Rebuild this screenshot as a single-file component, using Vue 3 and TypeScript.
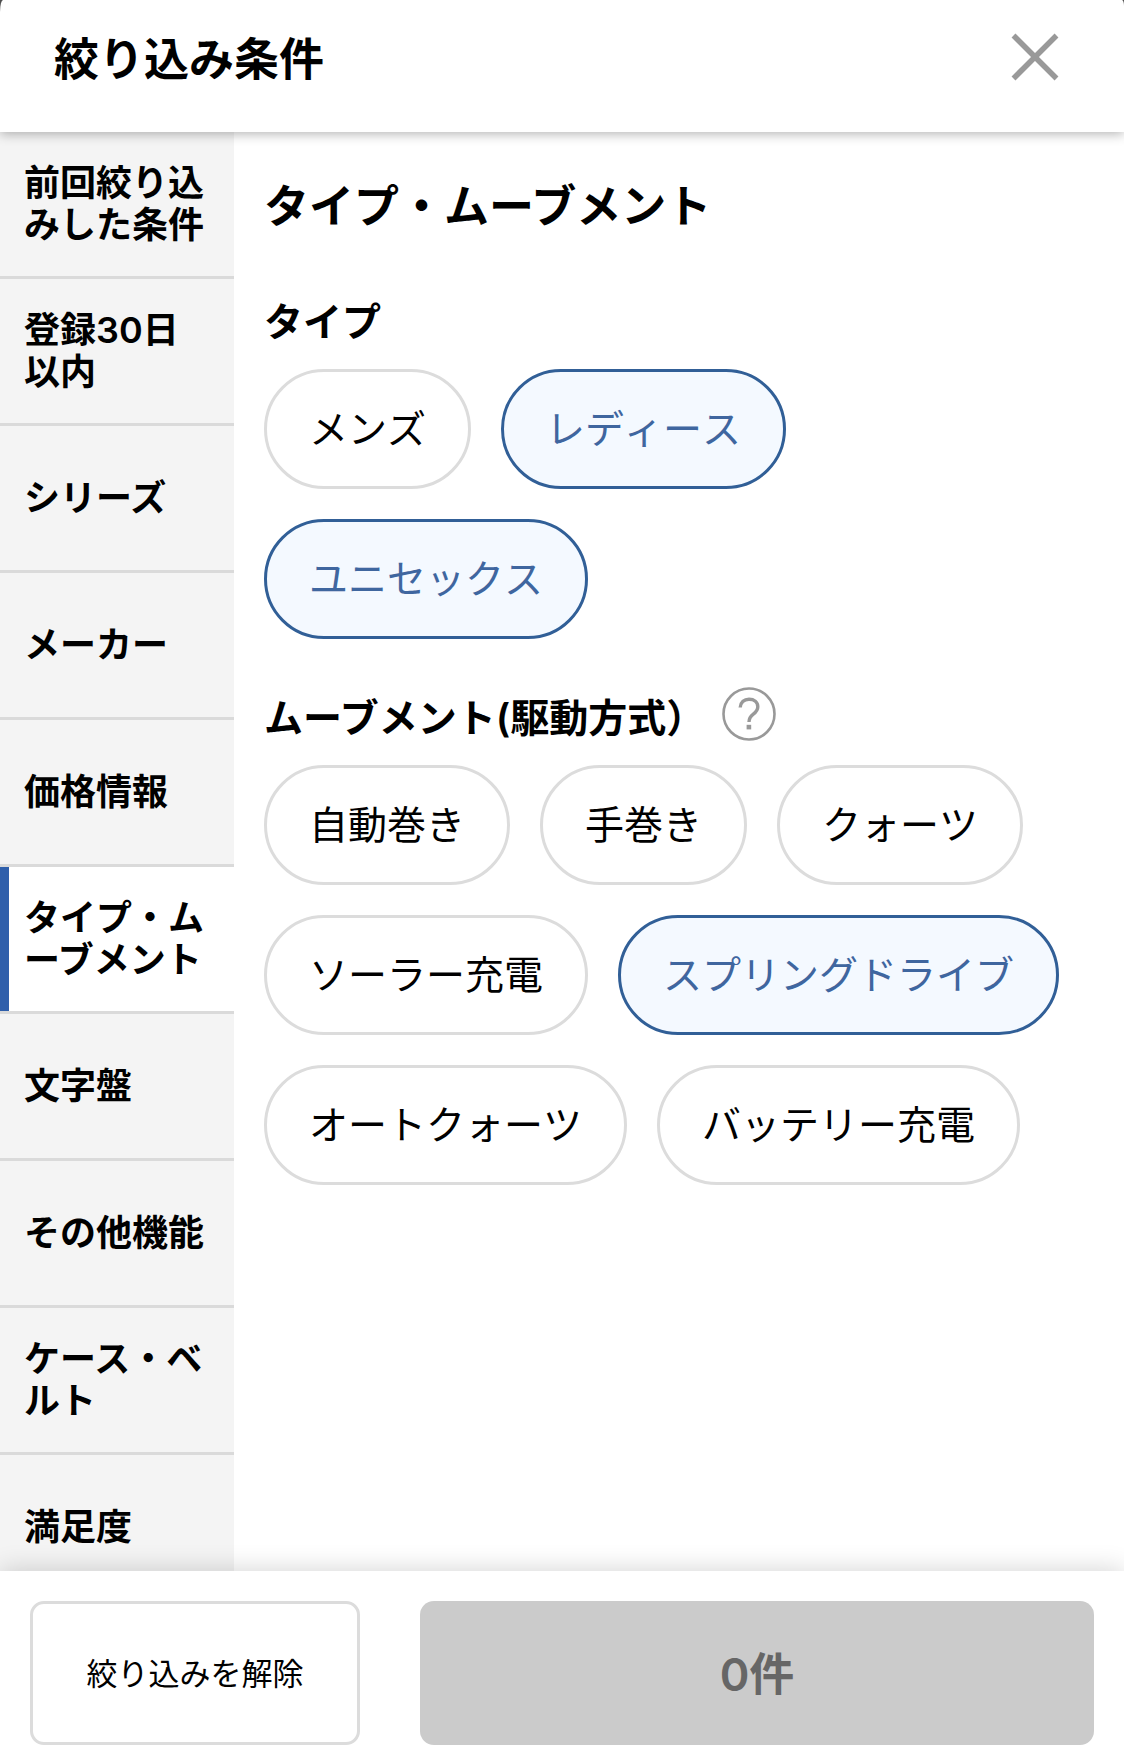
<script setup lang="ts">
import { ref } from 'vue'

interface Option {
  label: string
  selected: boolean
}

interface Group {
  title: string
  help: boolean
  options: Option[]
}

const categories: string[] = [
  '前回絞り込みした条件',
  '登録30日以内',
  'シリーズ',
  'メーカー',
  '価格情報',
  'タイプ・ムーブメント',
  '文字盤',
  'その他機能',
  'ケース・ベルト',
  '満足度',
]

const active = ref('タイプ・ムーブメント')

const groups = ref<Group[]>([
  {
    title: 'タイプ',
    help: false,
    options: [
      { label: 'メンズ', selected: false },
      { label: 'レディース', selected: true },
      { label: 'ユニセックス', selected: true },
    ],
  },
  {
    title: 'ムーブメント(駆動方式）',
    help: true,
    options: [
      { label: '自動巻き', selected: false },
      { label: '手巻き', selected: false },
      { label: 'クォーツ', selected: false },
      { label: 'ソーラー充電', selected: false },
      { label: 'スプリングドライブ', selected: true },
      { label: 'オートクォーツ', selected: false },
      { label: 'バッテリー充電', selected: false },
    ],
  },
])

function clearAll(): void {
  groups.value.forEach((g) => g.options.forEach((o) => (o.selected = false)))
}
</script>

<template>
  <div class="sheet" lang="ja">
    <header class="header">
      <h1 class="header-title">絞り込み条件</h1>
      <button class="close" type="button" aria-label="閉じる">
        <svg viewBox="0 0 48 48" width="48" height="48" aria-hidden="true">
          <path d="M2.5 2.5 45.5 45.5M45.5 2.5 2.5 45.5" fill="none" stroke="#999" stroke-width="5.5" />
        </svg>
      </button>
    </header>

    <div class="body">
      <nav class="sidebar">
        <button
          v-for="name in categories"
          :key="name"
          type="button"
          class="category"
          :class="{ active: name === active }"
          @click="active = name"
        >
          {{ name }}
        </button>
      </nav>

      <main class="content">
        <h2 class="title">{{ active }}</h2>
        <section v-for="group in groups" :key="group.title" class="group">
          <div class="group-head">
            <h3 class="group-title">{{ group.title }}</h3>
            <button v-if="group.help" class="help" type="button" aria-label="ヘルプ">
              <svg viewBox="0 0 54 54" width="54" height="54" aria-hidden="true">
                <circle cx="27" cy="27" r="25.5" fill="none" stroke="#999" stroke-width="2.6" />
                <path
                  d="M18.2 20.5C18.600 15 22.200 12.200 27 12.200c5.200 0 8.800 3 8.800 7.500 0 3.300-1.700 5.300-4.500 7.400-2.900 2.200-4.300 3.700-4.300 7.900"
                  fill="none"
                  stroke="#999"
                  stroke-width="3.400"
                />
                <rect x="24.600" y="37.800" width="4.600" height="4.600" fill="#999" />
              </svg>
            </button>
          </div>
          <div class="chips">
            <button
              v-for="option in group.options"
              :key="option.label"
              type="button"
              class="chip"
              :class="{ selected: option.selected }"
              :aria-pressed="option.selected"
              @click="option.selected = !option.selected"
            >
              {{ option.label }}
            </button>
          </div>
        </section>
      </main>
    </div>

    <footer class="footer">
      <button class="clear" type="button" @click="clearAll">絞り込みを解除</button>
      <button class="submit" type="button" disabled>0件</button>
    </footer>
  </div>
</template>

<style>
body {
  margin: 0;
  background: #555;
}
</style>

<style scoped>
.sheet {
  display: flex;
  flex-direction: column;
  height: 100vh;
  color: #000;
  font-family: Inter, 'Noto Sans CJK JP', sans-serif;
}

h1,
h2,
h3 {
  margin: 0;
}

button {
  margin: 0;
  padding: 0;
  border: 0;
  background: none;
  color: inherit;
  font: inherit;
  cursor: pointer;
}

.header {
  position: relative;
  z-index: 1;
  flex: none;
  display: flex;
  align-items: center;
  justify-content: space-between;
  box-sizing: border-box;
  height: 132px;
  padding: 0 65px 18px 54px;
  background: #fff;
  border-radius: 3px 2px 0 0 / 12px 6px 0 0;
  box-shadow: 0 2px 12px rgba(0, 0, 0, 0.3);
}

.header-title {
  padding-top: 6px;
  font-size: 45px;
  line-height: 60px;
  font-weight: 600;
}

.close,
.help {
  display: block;
}

.close svg,
.help svg {
  display: block;
}

.body {
  flex: 1;
  display: flex;
  min-height: 0;
  background: #fff;
}

.sidebar {
  flex: none;
  width: 234px;
  overflow: hidden;
  background: #f4f4f4;
}

.category {
  display: block;
  box-sizing: border-box;
  width: 100%;
  height: 147px;
  padding: 0 24px;
  border-bottom: 3px solid #dadada;
  font-size: 36px;
  line-height: 42px;
  font-weight: 600;
  text-align: left;
  word-break: break-all;
  line-break: anywhere;
}

.category.active {
  background: linear-gradient(#2f5fab, #2f5fab) left / 9px 100% no-repeat #fff;
}

.content {
  flex: 1;
  min-width: 0;
  padding: 45px 30px 0;
  overflow: hidden;
}

.title {
  font-size: 45px;
  line-height: 60px;
  font-weight: 600;
  margin-bottom: 54px;
}

.group {
  margin-bottom: 48px;
}

.group-head {
  display: flex;
  align-items: center;
  gap: 17px;
  height: 54px;
  margin-bottom: 24px;
}

.group-title {
  padding-top: 8px;
  font-size: 39px;
  line-height: 54px;
  font-weight: 600;
}

.chips {
  display: flex;
  flex-wrap: wrap;
  gap: 30px;
}

.chip {
  box-sizing: border-box;
  height: 120px;
  padding: 0 42px;
  border: 3px solid #dcdcdc;
  border-radius: 60px;
  background: #fff;
  font-size: 39px;
  line-height: 54px;
  font-kerning: none;
  white-space: nowrap;
}

.chip.selected {
  border-color: #315f97;
  background: #f4f9ff;
  color: #3f669f;
}

.footer {
  position: relative;
  z-index: 1;
  flex: none;
  display: flex;
  gap: 60px;
  padding: 30px 30px 13px;
  background: #fff;
  box-shadow: 0 -2px 24px rgba(0, 0, 0, 0.16);
}

.clear,
.submit {
  box-sizing: border-box;
  height: 144px;
  padding-bottom: 4px;
  border-radius: 14px;
}

.clear {
  flex: 324 1 0;
  border: 3px solid #dcdcdc;
  font-size: 31px;
}

.submit {
  flex: 674 1 0;
  background: #cbcbcb;
  color: #666;
  font-size: 45px;
  font-weight: 600;
  cursor: default;
}
</style>
